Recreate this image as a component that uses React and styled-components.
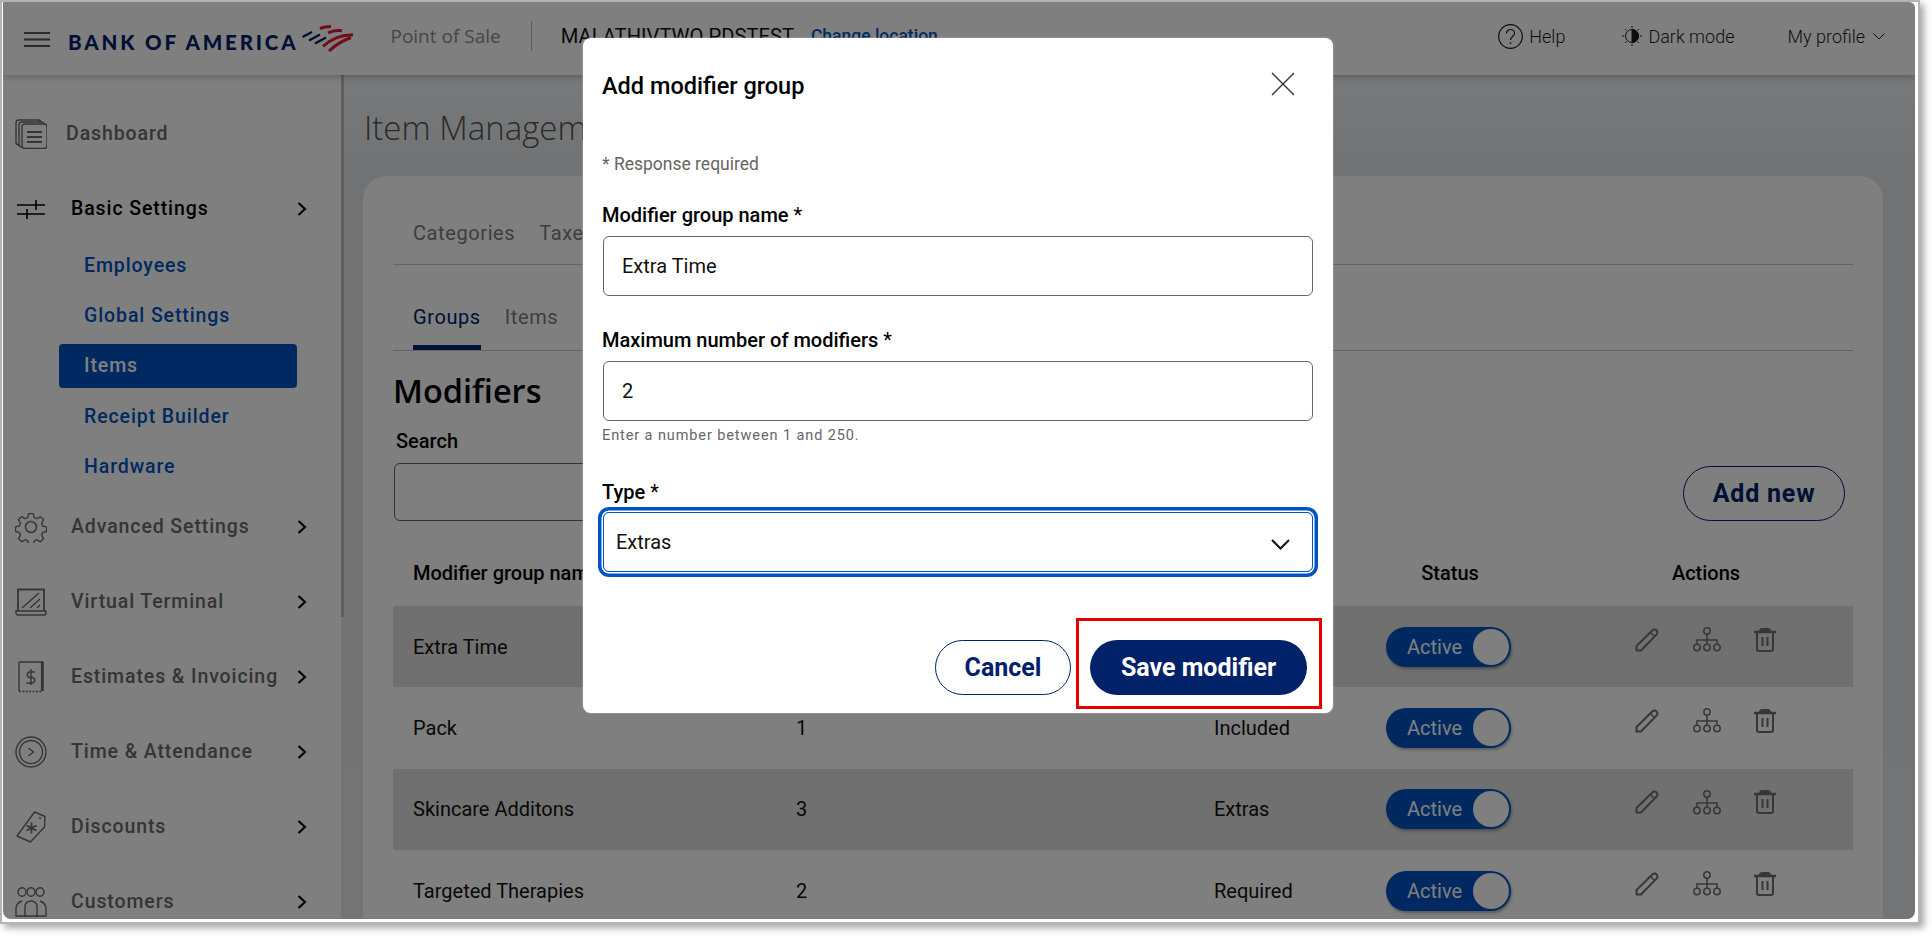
import styled, { createGlobalStyle } from "styled-components";

const GlobalStyle = createGlobalStyle`
  html, body {
    margin: 0;
    height: 100%;
    overflow: hidden;
    background: #fff;
    font-family: Roboto, "Liberation Sans", sans-serif;
  }
  * { box-sizing: border-box; }
`;

const Frame = styled.div`
  width: 1920px;
  height: 924px;
  border: 2px solid #b4b4b4;
  border-bottom-width: 2px;
  padding: 0 3px 3px 1px;
  background: #fff;
  box-shadow: 4px 4px 7px rgba(0, 0, 0, 0.35);
`;

const AppWindow = styled.div`
  position: relative;
  height: 100%;
  display: flex;
  flex-direction: column;
  overflow: hidden;
  border-radius: 0 6px 8px 8px;
  background: #e8eaed;
`;

/* top bar */
const Header = styled.header`
  height: 73px;
  flex: none;
  display: flex;
  align-items: center;
  padding: 0 30px 0 21px;
  background: #fff;
  box-shadow: 0 2px 6px rgba(0, 0, 0, 0.25);
  position: relative;
  z-index: 1;
`;

const Burger = styled.svg`
  width: 26px;
  height: 15px;
  margin-top: 1px;
  color: #555;
`;

const Logo = styled.div`
  display: flex;
  align-items: flex-start;
  margin-left: 18px;
`;

const LogoText = styled.span`
  font-family: Lato, sans-serif;
  font-weight: 900;
  font-size: 20.5px;
  letter-spacing: 2.85px;
  line-height: 24px;
  color: #012169;
  margin-top: 7px;
  white-space: nowrap;
`;

const Flag = styled.svg`
  width: 52px;
  height: 27px;
  margin-left: 4px;
  margin-top: 2px;
`;

const Product = styled.span`
  font-family: "Open Sans", sans-serif;
  font-size: 19px;
  color: #8c8c8c;
  margin-left: 36px;
  margin-top: -5px;
`;

const HeaderDivider = styled.div`
  width: 1px;
  height: 30px;
  margin: -5px 29px 0 30px;
  background: #b8b8b8;
`;

const Location = styled.span`
  font-size: 20.2px;
  color: #111;
  margin-top: -5px;
  white-space: nowrap;
`;

const ChangeLink = styled.a`
  font-size: 17.5px;
  font-weight: 500;
  color: #0053c2;
  margin: -5px 0 0 17px;
  white-space: nowrap;
`;

const HeaderRight = styled.div`
  margin-left: auto;
  margin-top: -5px;
  display: flex;
  align-items: center;
  color: #1c1c1c;
  font-size: 18px;
  font-weight: 300;
`;

const HeaderItem = styled.span`
  display: flex;
  align-items: center;
  gap: ${(p) => p.$gap}px;
  margin-left: ${(p) => p.$left}px;
  white-space: nowrap;
`;

/* body */
const Body = styled.div`
  flex: 1;
  min-height: 0;
  display: flex;
`;

const Sidebar = styled.nav`
  width: 338px;
  flex: none;
  padding-top: 21px;
  background: #fff;
`;

const Rail = styled.div`
  width: 3px;
  flex: none;
  background: #e6e8ec;
`;

const RailThumb = styled.div`
  height: 542px;
  background: #bcbcbc;
`;

const NavRow = styled.div`
  height: 75px;
  display: flex;
  align-items: center;
  padding: 0 34px 0 12px;
  color: ${(p) => (p.$open ? "#000" : "#6a6a6a")};
  font-size: 19.5px;
  font-weight: 500;
  letter-spacing: 0.9px;
  white-space: nowrap;
`;

const NavIcon = styled.span`
  width: 32px;
  flex: none;
  display: flex;
  justify-content: center;
  color: ${(p) => (p.$open ? "#000" : "#6a6a6a")};
`;

const NavLabel = styled.span`
  margin-left: ${(p) => p.$left}px;
`;

const NavChevron = styled.svg`
  width: 10px;
  height: 14px;
  margin-left: auto;
  color: #000;
`;

const SubList = styled.div`
  margin: -6px 0 -2.5px;
`;

const SubRow = styled.div`
  height: 50.4px;
  display: flex;
  align-items: center;
  padding-left: 56px;
`;

const SubLink = styled.a`
  width: 238px;
  height: 44px;
  display: flex;
  align-items: center;
  padding-left: 25px;
  border-radius: 4px;
  font-size: 19.5px;
  font-weight: 500;
  letter-spacing: 0.9px;
  color: ${(p) => (p.$active ? "#fff" : "#0053c2")};
  background: ${(p) => (p.$active ? "#0053c2" : "transparent")};
`;

const Main = styled.main`
  flex: 1;
  min-width: 0;
  padding: 30px 32px 0 19px;
  background: linear-gradient(#f0f2f4, #e2e4e8 110px, #e6e8ec);
`;

const PageTitle = styled.h1`
  margin: 0 0 25px;
  padding-left: 1px;
  height: 46px;
  line-height: 46px;
  font-family: "Open Sans", sans-serif;
  font-weight: 300;
  font-size: 33px;
  color: #555;
  white-space: nowrap;
`;

const Card = styled.section`
  height: 900px;
  padding: 45px 30px 0;
  border-radius: 24px 24px 0 0;
  background: #fff;
`;

const TopTabs = styled.div`
  display: flex;
  gap: 24px;
  padding: 0 0 19px 20px;
  border-bottom: 1px solid #c4c4c4;
  font-size: 20px;
  line-height: 24px;
  letter-spacing: 0.6px;
  color: #7c7c7c;
`;

const SubTabs = styled.div`
  display: flex;
  gap: 24px;
  height: 86px;
  padding-left: 20px;
  border-bottom: 1px solid #c4c4c4;
`;

const SubTab = styled.a`
  height: 85px;
  padding-top: 40px;
  font-size: 20px;
  line-height: 24px;
  letter-spacing: 0.6px;
  color: ${(p) => (p.$active ? "#012169" : "#7c7c7c")};
  border-bottom: 5px solid ${(p) => (p.$active ? "#012169" : "transparent")};
`;

const Heading = styled.h2`
  margin: 18px 0 0;
  height: 46px;
  line-height: 44px;
  font-family: "Open Sans", sans-serif;
  font-weight: 550;
  font-size: 32.5px;
  color: #000;
`;

const SearchRow = styled.div`
  display: flex;
  align-items: flex-end;
  justify-content: space-between;
  padding: 14px 8px 0 1px;
`;

const SearchLabel = styled.div`
  padding-left: 2px;
  font-size: 20px;
  font-weight: 500;
  line-height: 24px;
  color: #000;
`;

const SearchBox = styled.div`
  width: 500px;
  height: 58px;
  margin-top: 10px;
  border: 1px solid #666;
  border-radius: 6px;
`;

const OutlineButton = styled.button`
  height: 55px;
  width: ${(p) => p.$width}px;
  padding: 0;
  border: 1px solid #012169;
  border-radius: 28px;
  background: #fff;
  color: #012169;
  font-family: Roboto, sans-serif;
  font-size: 25px;
  font-weight: 700;
  letter-spacing: ${(p) => p.$spacing || 0}px;
`;

const Grid = styled.div`
  display: grid;
  grid-template-columns: 383px 418px 172px 249px 1fr;
  align-items: center;
  padding-left: 20px;
  font-size: 20px;
  color: #111;
`;

const HeadRow = styled(Grid)`
  height: 66px;
  margin-top: 19px;
  font-weight: 500;
  color: #000;
`;

const HeadCell = styled.span`
  width: ${(p) => p.$width || "auto"};
  text-align: ${(p) => (p.$width ? "center" : "left")};
  white-space: nowrap;
`;

const TableRow = styled(Grid)`
  height: 81.3px;
  background: ${(p) => (p.$striped ? "#e0e0e0" : "transparent")};
`;

const Toggle = styled.div`
  width: 125px;
  height: 40px;
  display: flex;
  align-items: center;
  justify-content: space-between;
  padding: 0 2px 0 21px;
  border-radius: 20px;
  background: #0053c2;
  color: #fff;
  box-shadow: 1px 2px 3px rgba(0, 0, 0, 0.3);
`;

const Knob = styled.span`
  width: 36px;
  height: 36px;
  border-radius: 50%;
  background: #fff;
`;

const Actions = styled.div`
  display: flex;
  align-items: center;
  gap: 33.5px;
  margin-bottom: 14px;
  color: #6e6e6e;
`;

/* modal */
const Overlay = styled.div`
  position: absolute;
  inset: 0;
  z-index: 5;
  padding: 36px 0 0 580px;
  background: rgba(0, 0, 0, 0.5);
`;

const Modal = styled.div`
  width: 750px;
  height: 675px;
  padding: 32px 11px 0 19px;
  border-radius: 8px;
  background: #fff;
  box-shadow: 0 0 2px rgba(255, 255, 255, 0.5);
`;

const ModalHead = styled.div`
  height: 32px;
  display: flex;
  align-items: center;
  justify-content: space-between;
  padding-right: 27px;
`;

const ModalTitle = styled.h3`
  margin: 0;
  font-size: 23.5px;
  font-weight: 500;
  color: #000;
`;

const CloseIcon = styled.svg`
  width: 24px;
  height: 24px;
  margin-top: -4px;
  color: #333;
`;

const Required = styled.div`
  margin-top: 50px;
  font-size: 17.5px;
  line-height: 24px;
  color: #666;
`;

const FieldLabel = styled.label`
  display: block;
  margin-top: ${(p) => p.$top}px;
  font-size: 20px;
  font-weight: 500;
  line-height: 24px;
  color: #000;
`;

const Star = styled.span`
  font-weight: 400;
`;

const Field = styled.div`
  width: 710px;
  height: 60px;
  margin: 9px 0 0 1px;
  display: flex;
  align-items: center;
  padding-left: 18px;
  border: 1px solid #666;
  border-radius: 6px;
  font-size: 20px;
  color: #111;
`;

const Hint = styled.div`
  margin-top: 6px;
  font-size: 14.5px;
  line-height: 18px;
  letter-spacing: 0.9px;
  color: #666;
`;

const SelectField = styled(Field)`
  margin-top: 8px;
  padding: 0 22px 0 12px;
  justify-content: space-between;
  border-color: #0053c2;
  box-shadow: 0 0 0 1.5px #fff, 0 0 0 5px #0053c2;
`;

const SelectChevron = styled.svg`
  width: 19px;
  height: 11px;
  margin-top: 4px;
  color: #111;
`;

const ModalFoot = styled.div`
  margin-top: 46px;
  display: flex;
  justify-content: flex-end;
  align-items: flex-end;
  gap: 5px;
`;

const CancelButton = styled(OutlineButton)`
  margin-bottom: 14px;
`;

const Highlight = styled.div`
  width: 246px;
  height: 91px;
  padding: 19px 12px 0 11px;
  border: 3px solid #e30000;
`;

const SaveButton = styled.button`
  width: 217px;
  height: 55px;
  padding: 0;
  border: 0;
  border-radius: 28px;
  background: #012169;
  color: #fff;
  font-family: Roboto, sans-serif;
  font-size: 25px;
  font-weight: 700;
`;

/* drawings */
const Line = ({ w, h, children, ...rest }) => (
    <svg width={w} height={h} viewBox={`0 0 ${w} ${h}`} fill="none" stroke="currentColor" {...rest}>
        {children}
    </svg>
);

const DashboardIcon = () => (
    <Line w={32} h={30} strokeWidth="1.4">
        <rect x="1" y="1" width="25" height="25" rx="3" />
        <rect x="4" y="3" width="25" height="25" rx="3" fill="#fff" />
        <rect x="7" y="5" width="25" height="24.5" rx="3" fill="#fff" />
        <path d="M12 13h15M12 18h15M12 23h15" strokeWidth="1.8" />
    </Line>
);

const SlidersIcon = () => (
    <Line w={28} h={20} strokeWidth="1.6">
        <path d="M0 6h28M0 15h28" />
        <path d="M19 1v10M10 10v10" />
    </Line>
);

const GearIcon = () => (
    <Line w={32} h={32} strokeWidth="1.5" strokeLinejoin="round">
        <circle cx="16" cy="16" r="5.5" />
        <path d="M13.5 1.5h5l1 4.2 3 1.3 3.7-2.3 3.5 3.5-2.3 3.7 1.3 3 4.2 1v5l-4.2 1-1.3 3 2.300 3.700-3.500 3.500-3.700-2.300-3 1.300-1 4.200h-5l-1-4.200-3-1.300-3.700 2.300-3.500-3.500 2.300-3.700-1.300-3-4.200-1v-5l4.200-1 1.300-3-2.300-3.700 3.500-3.500 3.700 2.300 3-1.300z" transform="translate(1.300 1.300) scale(.92)" />
    </Line>
);

const LaptopIcon = () => (
    <Line w={32} h={28} strokeWidth="1.4">
        <path d="M3 23V1.500h26V23" strokeWidth="1.8" />
        <path d="M1 23h30v2a2 2 0 0 1-2 2H3a2 2 0 0 1-2-2z" />
        <path d="M7 20 24 5M15 20l10-9M22 20l3-3" />
    </Line>
);

const ReceiptIcon = () => (
    <Line w={28} h={32}>
        <path d="M2 1h24v29" strokeWidth="1.400" />
        <path d="M2 1v29" strokeWidth="1.400" />
        <path d="M25 1v29" strokeWidth="2.200" />
        <path d="M2 30.500h24" strokeWidth="1.600" strokeDasharray="2 1.400" />
        <path d="M14 8v16M18 11h-5.500a2.800 2.800 0 0 0 0 5.500h3a2.800 2.800 0 0 1 0 5.500H9.500" strokeWidth="1.400" />
    </Line>
);

const ClockIcon = () => (
    <Line w={32} h={32} strokeWidth="1.400">
        <circle cx="16" cy="16" r="15" />
        <circle cx="16" cy="16" r="11.500" />
        <path d="m13.500 12 5 4-5 4" />
    </Line>
);

const TagIcon = () => (
    <Line w={30} h={32} strokeWidth="1.400" strokeLinejoin="round">
        <path d="M18.500 1 29 5.500l-.500 10.500L14.500 31 1 25z" />
        <path d="M23 6.500l2 1" />
        <path d="M15.500 11.500v11M10.500 14.500l10 5M10.500 19.500l10-5" strokeWidth="1.800" />
    </Line>
);

const CustomersIcon = () => (
    <Line w={32} h={30} strokeWidth="1.400">
        <ellipse cx="7" cy="5" rx="4" ry="4.200" />
        <ellipse cx="16" cy="5" rx="4" ry="4.200" />
        <ellipse cx="25" cy="5" rx="4" ry="4.200" />
        <path d="M11 29H1v-7c0-5 3-7 6-8M21 29h10v-7c0-5-3-7-6-8" />
        <path d="M10 29V19c0-3 3-5 6-5s6 2 6 5v10z" />
    </Line>
);

const PencilIcon = () => (
    <Line w={24} h={24} strokeWidth="2" strokeLinejoin="round">
        <path d="M1.500 22.500V18L17.500 2.200c1-1 3-1 4 .2 1.200 1.100 1.200 3 .2 4L6 22.500z" />
        <path d="M15.500 4.500l4 4" strokeWidth="1.500" />
    </Line>
);

const TreeIcon = () => (
    <Line w={28} h={25} strokeWidth="1.500">
        <circle cx="14" cy="4" r="3.200" />
        <circle cx="4" cy="20.500" r="3.200" />
        <circle cx="14" cy="20.500" r="3.200" />
        <circle cx="24" cy="20.500" r="3.200" />
        <path d="M14 7v10M4 17v-4h20v4" />
    </Line>
);

const TrashIcon = () => (
    <Line w={22} h={24} strokeWidth="2">
        <path d="M0 4h22" strokeWidth="2.500" />
        <path d="M6 3.500c0-2 1-2.500 2-2.500h6c1 0 2 .5 2 2.500" fill="currentColor" />
        <path d="M3 5v16c0 1 .7 2 2 2h12c1.300 0 2-1 2-2V5" />
        <path d="M8.500 9v9M13.500 9v9" />
    </Line>
);

const Chevron = () => (
    <NavChevron viewBox="0 0 10 14" fill="none" stroke="currentColor" strokeWidth="2.200">
        <path d="M1.500 1 8 7l-6.500 6" />
    </NavChevron>
);

const navTop = [
    { label: "Advanced Settings", icon: <GearIcon /> },
    { label: "Virtual Terminal", icon: <LaptopIcon /> },
    { label: "Estimates & Invoicing", icon: <ReceiptIcon /> },
    { label: "Time & Attendance", icon: <ClockIcon /> },
    { label: "Discounts", icon: <TagIcon /> },
    { label: "Customers", icon: <CustomersIcon /> },
];

const subLinks = ["Employees", "Global Settings", "Items", "Receipt Builder", "Hardware"];

const rows = [
    { name: "Extra Time", max: "2", type: "Extras" },
    { name: "Pack", max: "1", type: "Included" },
    { name: "Skincare Additons", max: "3", type: "Extras" },
    { name: "Targeted Therapies", max: "2", type: "Required" },
];

export default function App() {
    return (
        <>
            <GlobalStyle />
            <Frame>
                <AppWindow>
                    <Header>
                        <Burger viewBox="0 0 26 15" stroke="currentColor" strokeWidth="2">
                            <path d="M0 1h26M0 7.500h26M0 14h26" />
                        </Burger>
                        <Logo>
                            <LogoText>BANK OF AMERICA</LogoText>
                            <Flag viewBox="0 0 52 27" fill="none">
                                <g stroke="#012169" strokeWidth="2.400">
                                    <path d="M0.500 12 10 7" />
                                    <path d="M7 15.500 18 9.500" />
                                    <path d="M13 18.500 24 12.500" />
                                </g>
                                <g stroke="#e31837" strokeWidth="3">
                                    <path d="M18 3.500C21 2.200 25 1.500 29 1.500" />
                                    <path d="M26 7.800C30 6.200 36 5.300 40 5.800" />
                                    <path d="M21 21.500C29 14 40 9.800 51 9.800" />
                                    <path d="M27 26C33 20.500 41 15.500 49 12.500" />
                                </g>
                            </Flag>
                        </Logo>
                        <Product>Point of Sale</Product>
                        <HeaderDivider />
                        <Location>MALATHIVTWO PDSTEST</Location>
                        <ChangeLink>Change location</ChangeLink>
                        <HeaderRight>
                            <HeaderItem $gap={6} $left={0}>
                                <Line w={25} h={25} strokeWidth="1.200">
                                    <circle cx="12.500" cy="12.500" r="11.800" />
                                    <path d="M8.500 9.500c0-2.500 2-4 4-4s4 1.500 4 3.800c0 3.200-4 3.200-4 6.700" />
                                    <path d="M12.500 18.500v1.600" strokeWidth="1.600" />
                                </Line>
                                Help
                            </HeaderItem>
                            <HeaderItem $gap={6} $left={57}>
                                <Line w={20} h={20} strokeWidth="1">
                                    <circle cx="10" cy="10" r="6.500" />
                                    <path d="M10 3.500a6.500 6.500 0 0 1 0 13z" fill="currentColor" />
                                    <path d="M10 0v2M10 18v2M0 10h2M18 10h2M3 3l1.400 1.400M15.600 15.600 17 17M3 17l1.400-1.400M15.600 4.400 17 3" />
                                </Line>
                                Dark mode
                            </HeaderItem>
                            <HeaderItem $gap={8} $left={53}>
                                My profile
                                <Line w={12} h={7} strokeWidth="1">
                                    <path d="m.5.500 5.500 5.500 5.500-5.500" />
                                </Line>
                            </HeaderItem>
                        </HeaderRight>
                    </Header>
                    <Body>
                        <Sidebar>
                            <NavRow>
                                <NavIcon><DashboardIcon /></NavIcon>
                                <NavLabel $left={19}>Dashboard</NavLabel>
                            </NavRow>
                            <NavRow $open>
                                <NavIcon $open><SlidersIcon /></NavIcon>
                                <NavLabel $left={24}>Basic Settings</NavLabel>
                                <Chevron />
                            </NavRow>
                            <SubList>
                                {subLinks.map((link) => (
                                    <SubRow key={link}>
                                        <SubLink $active={link === "Items"}>{link}</SubLink>
                                    </SubRow>
                                ))}
                            </SubList>
                            {navTop.map((item) => (
                                <NavRow key={item.label}>
                                    <NavIcon>{item.icon}</NavIcon>
                                    <NavLabel $left={24}>{item.label}</NavLabel>
                                    <Chevron />
                                </NavRow>
                            ))}
                        </Sidebar>
                        <Rail><RailThumb /></Rail>
                        <Main>
                            <PageTitle>Item Management</PageTitle>
                            <Card>
                                <TopTabs>
                                    <span>Categories</span>
                                    <span>Taxes</span>
                                </TopTabs>
                                <SubTabs>
                                    <SubTab $active>Groups</SubTab>
                                    <SubTab>Items</SubTab>
                                </SubTabs>
                                <Heading>Modifiers</Heading>
                                <SearchRow>
                                    <div>
                                        <SearchLabel>Search</SearchLabel>
                                        <SearchBox />
                                    </div>
                                    <OutlineButton $width={162} $spacing={0.8}>Add new</OutlineButton>
                                </SearchRow>
                                <HeadRow>
                                    <HeadCell>Modifier group name</HeadCell>
                                    <span />
                                    <span />
                                    <HeadCell $width="128px">Status</HeadCell>
                                    <HeadCell $width="142px">Actions</HeadCell>
                                </HeadRow>
                                {rows.map((row, i) => (
                                    <TableRow key={row.name} $striped={i % 2 === 0}>
                                        <span>{row.name}</span>
                                        <span>{row.max}</span>
                                        <span>{row.type}</span>
                                        <Toggle>
                                            Active
                                            <Knob />
                                        </Toggle>
                                        <Actions>
                                            <PencilIcon />
                                            <TreeIcon />
                                            <TrashIcon />
                                        </Actions>
                                    </TableRow>
                                ))}
                            </Card>
                        </Main>
                    </Body>
                    <Overlay>
                        <Modal>
                            <ModalHead>
                                <ModalTitle>Add modifier group</ModalTitle>
                                <CloseIcon viewBox="0 0 24 24" fill="none" stroke="currentColor" strokeWidth="1.400">
                                    <path d="m1 1 22 22M23 1 1 23" />
                                </CloseIcon>
                            </ModalHead>
                            <Required>* Response required</Required>
                            <FieldLabel $top={27}>Modifier group name <Star>*</Star></FieldLabel>
                            <Field>Extra Time</Field>
                            <FieldLabel $top={32}>Maximum number of modifiers <Star>*</Star></FieldLabel>
                            <Field>2</Field>
                            <Hint>Enter a number between 1 and 250.</Hint>
                            <FieldLabel $top={35}>Type <Star>*</Star></FieldLabel>
                            <SelectField>
                                Extras
                                <SelectChevron viewBox="0 0 19 11" fill="none" stroke="currentColor" strokeWidth="2">
                                    <path d="m1 1 8.500 8.500L18 1" />
                                </SelectChevron>
                            </SelectField>
                            <ModalFoot>
                                <CancelButton $width={136}>Cancel</CancelButton>
                                <Highlight>
                                    <SaveButton>Save modifier</SaveButton>
                                </Highlight>
                            </ModalFoot>
                        </Modal>
                    </Overlay>
                </AppWindow>
            </Frame>
        </>
    );
}
